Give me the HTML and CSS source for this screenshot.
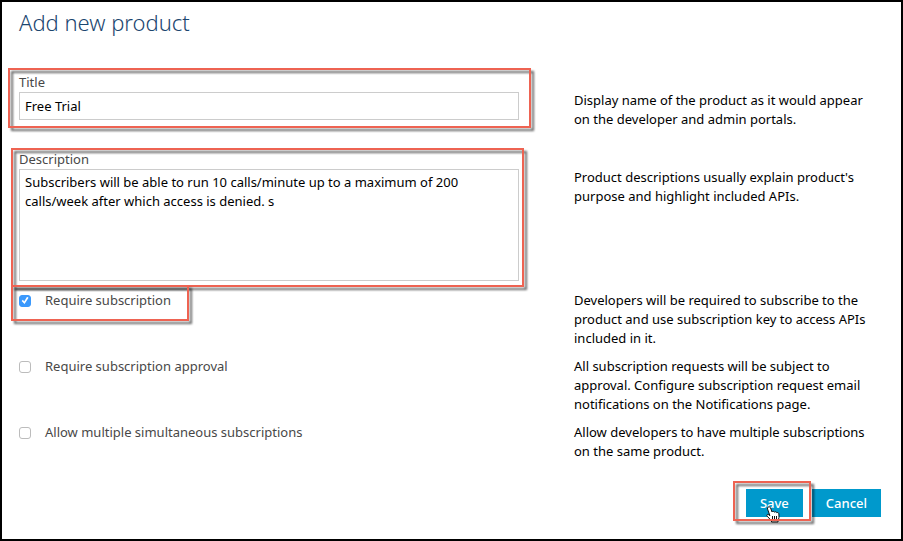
FILE: index.html
```html
<!DOCTYPE html>
<html lang="en">
<head>
<meta charset="utf-8">
<title>Add new product</title>
<link rel="stylesheet" href="styles.css">
</head>
<body>
<main class="page">
  <h1 class="heading">Add new product</h1>
  <form class="form">
    <div class="row">
      <div class="field marked marked-title">
        <label class="label" for="title">Title</label>
        <input class="control" id="title" type="text" value="Free Trial">
      </div>
      <p class="help help-field">Display name of the product as it would appear on the developer and admin portals.</p>
    </div>
    <div class="row">
      <div class="field marked marked-description">
        <label class="label" for="description">Description</label>
        <textarea class="control control-area" id="description" spellcheck="false">Subscribers will be able to run 10 calls/minute up to a maximum of 200 calls/week after which access is denied. s</textarea>
      </div>
      <p class="help help-field">Product descriptions usually explain product's purpose and highlight included APIs.</p>
    </div>
    <div class="options">
      <div class="row">
        <div class="option marked marked-option">
          <input class="check" id="require" type="checkbox" checked>
          <label class="label" for="require">Require subscription</label>
        </div>
        <p class="help">Developers will be required to subscribe to the product and use subscription key to access APIs included in it.</p>
      </div>
      <div class="row">
        <div class="option">
          <input class="check" id="approval" type="checkbox">
          <label class="label" for="approval">Require subscription approval</label>
        </div>
        <p class="help">All subscription requests will be subject to approval. Configure subscription request email notifications on the Notifications page.</p>
      </div>
      <div class="row">
        <div class="option">
          <input class="check" id="multiple" type="checkbox">
          <label class="label" for="multiple">Allow multiple simultaneous subscriptions</label>
        </div>
        <p class="help">Allow developers to have multiple subscriptions on the same product.</p>
      </div>
    </div>
    <div class="actions">
      <div class="marked marked-save">
        <button class="button" type="button">Save</button>
        <svg class="pointer" width="14" height="17" viewBox="0 0 14 17" aria-hidden="true">
          <path d="M2 1.2C3 .3 4.200 1 4.600 2L6 6C6.600 5 8 5.200 8.400 6.200C9.200 5.400 10.400 5.700 10.800 6.700C11.800 6.200 12.800 6.800 12.900 8L13 11.500C13 13 12 13.800 12 15V16H5.500V14.800L1.200 10.200C.3 9.200 1.300 8 2.300 8.500L3.900 9.700L1.600 3.200C1.300 2.300 1.400 1.700 2 1.200Z" fill="#fff" stroke="#111" stroke-width="1"/>
          <path d="M6.500 10V13.500M8.500 10V13.500M10.500 10V13.500" fill="none" stroke="#111" stroke-width="1"/>
        </svg>
      </div>
      <button class="button" type="button">Cancel</button>
    </div>
  </form>
</main>
</body>
</html>
```

FILE: styles.css
```css
* {
  box-sizing: border-box;
}

body {
  margin: 0;
  background: #fff;
  color: #000;
  font: 13px/19px "Noto Sans", "Open Sans", sans-serif;
}

.page {
  min-height: 100vh;
  padding: 4px 20px 20px 17px;
  border: 2px solid #000;
}

.heading {
  margin: 0 0 35px;
  color: #1b466f;
  font: 300 22px/32px "Noto Sans", "Open Sans", sans-serif;
}

.form {
  display: flex;
  flex-direction: column;
}

.row {
  display: grid;
  grid-template-columns: minmax(0, 1fr) 307px;
  column-gap: 55px;
  align-items: start;
}

.form > .row + .row {
  margin-top: 21px;
}

.field {
  display: flex;
  flex-direction: column;
}

.label {
  color: #484848;
}

.control {
  width: 100%;
  height: 28px;
  padding: 3px 5px;
  border: 1px solid #ccc;
  border-radius: 0;
  background: #fff;
  color: #000;
  font: inherit;
  outline: none;
}

.control-area {
  height: 112px;
  resize: none;
}

.help {
  margin: 0;
}

.help-field {
  margin-top: 18px;
}

.options {
  display: grid;
  gap: 9px;
  margin-top: 10px;
}

.option {
  display: flex;
  align-items: center;
  gap: 14px;
  justify-self: start;
}

.check {
  display: grid;
  place-items: center;
  width: 12px;
  height: 12px;
  margin: 0;
  border: 1px solid #bcbcbc;
  border-radius: 3px;
  background: #fff;
  appearance: none;
}

.check:checked {
  border-color: #3b99fc;
  background: #3b99fc;
}

.check:checked::before {
  content: "";
  width: 8px;
  height: 8px;
  background: #fff;
  clip-path: polygon(8% 55%, 24% 42%, 40% 63%, 76% 4%, 94% 16%, 44% 94%);
}

/* Callout frames drawn over the highlighted controls */
.marked {
  position: relative;
}

.marked::after {
  content: "";
  position: absolute;
  border: 2px solid #ee6352;
  filter: drop-shadow(3px 3px 1px rgba(0, 0, 0, 0.6));
  pointer-events: none;
}

.marked-title::after {
  inset: -5px -12px -8px -11px;
}

.marked-description::after {
  inset: -2px -5px -6px -8px;
}

.marked-option::after {
  inset: -6px -18px -11px -8px;
}

.actions {
  display: flex;
  justify-content: flex-end;
  gap: 9px;
  margin-top: 28px;
}

.button {
  display: block;
  height: 28px;
  padding: 0 14px;
  border: 0;
  background: #0099cc;
  color: #fff;
  font: inherit;
  font-weight: 500;
}

.marked-save {
  z-index: 1;
}

.marked-save::after {
  inset: -8px -8px -4px -13px;
}

.pointer {
  position: absolute;
  top: 17px;
  left: 20px;
}
```
